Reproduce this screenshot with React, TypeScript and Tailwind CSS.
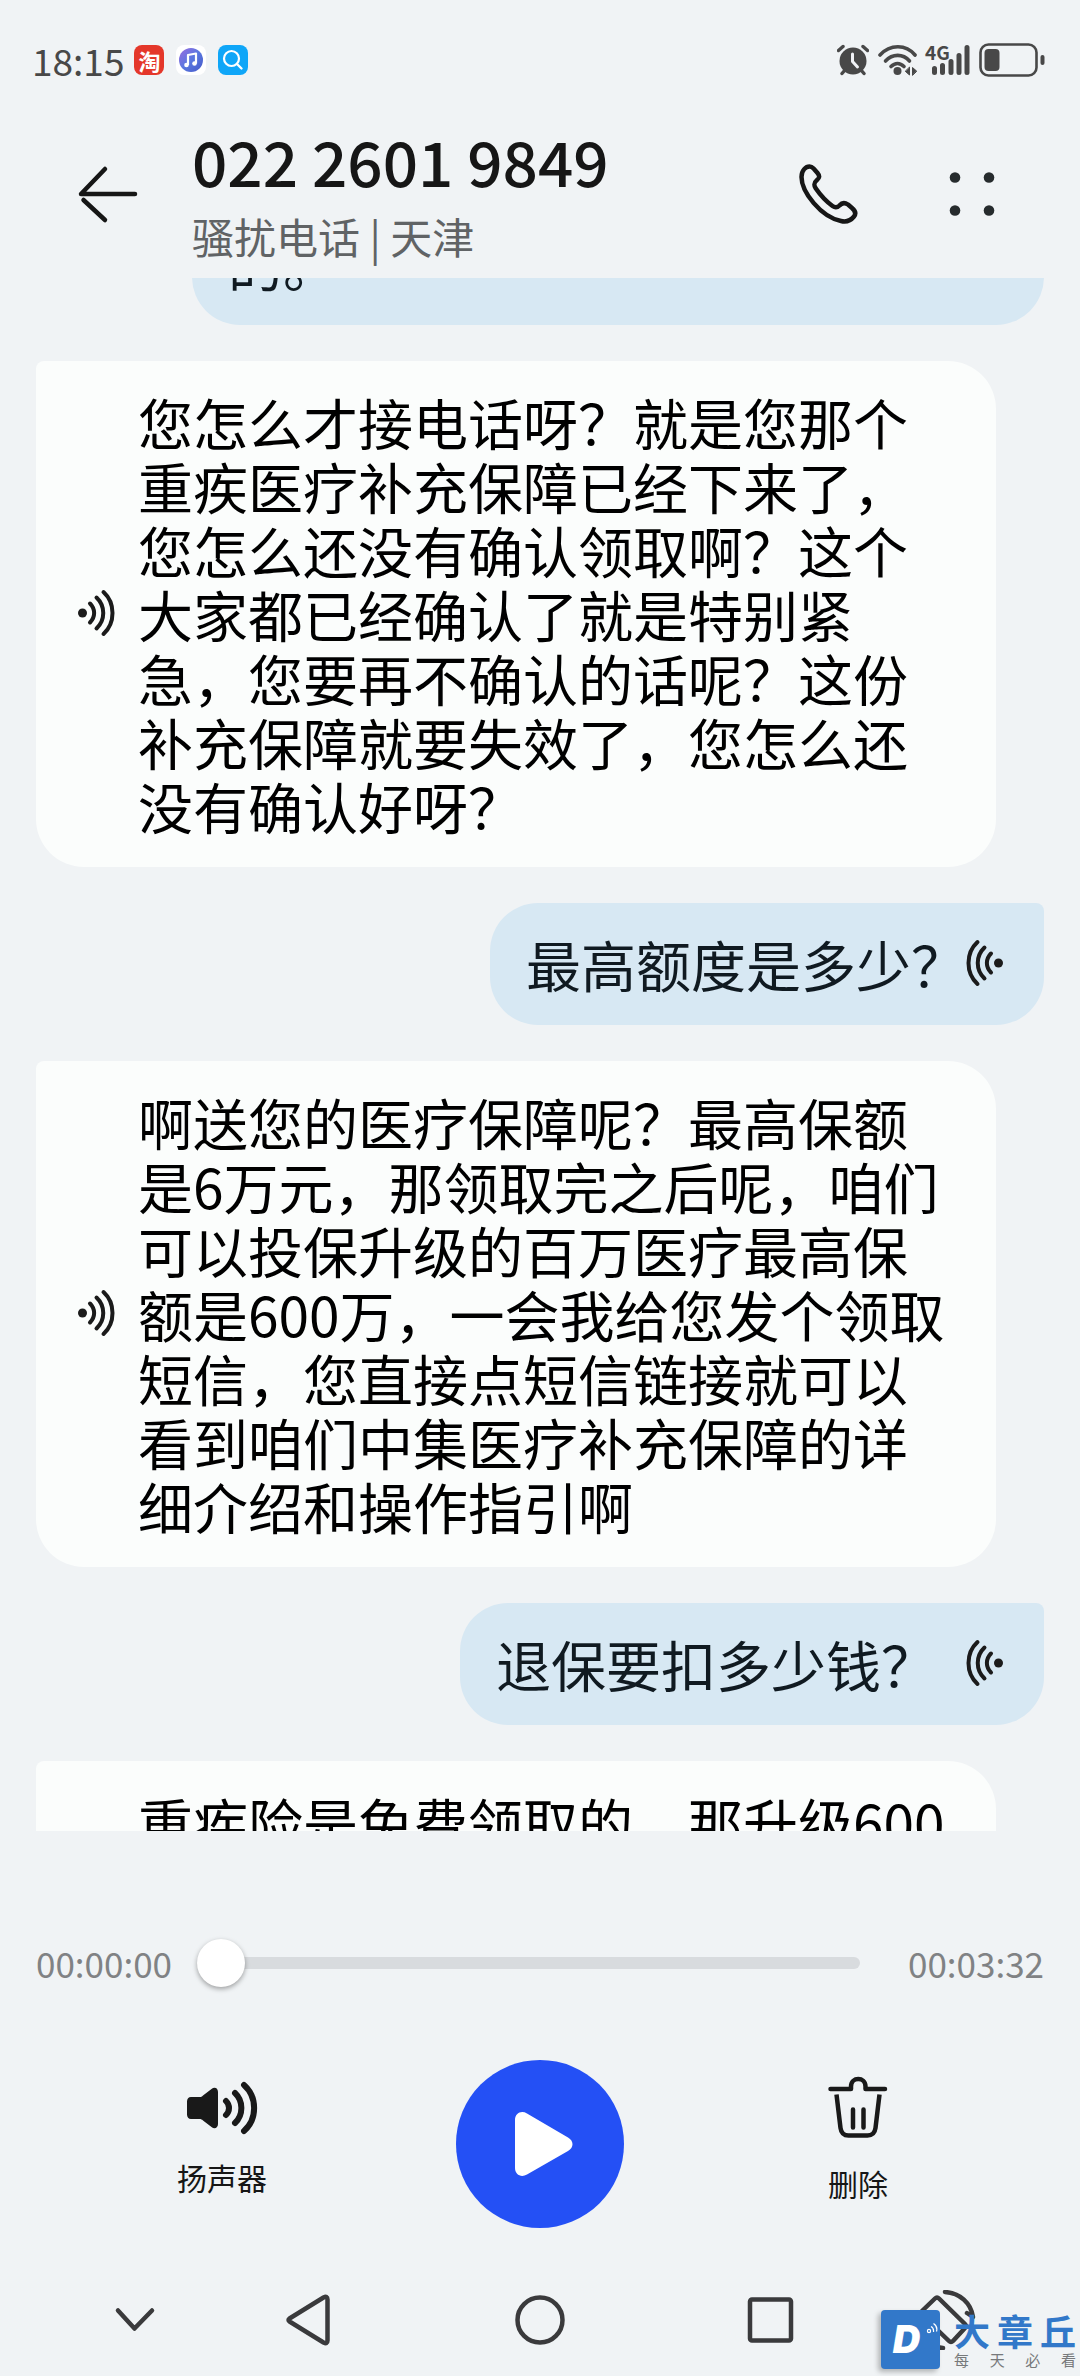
import { useState } from "react";
import type { ReactNode } from "react";

function SoundWave({ flipped = false }: { flipped?: boolean }) {
  return (
    <svg
      viewBox="0 0 38 48"
      className={flipped ? "h-12 w-[38px] shrink-0 -scale-x-100" : "h-12 w-[38px] shrink-0"}
      fill="none"
      stroke="#1b1b1b"
      strokeWidth="4"
      strokeLinecap="round"
      aria-hidden="true"
    >
      <circle cx="5.5" cy="24" r="4.5" fill="#1b1b1b" stroke="none" />
      <path d="M13 14.5C18.5 20 18.5 28 13 33.5" />
      <path d="M19.5 8.5C28.5 17 28.5 31 19.5 39.5" />
      <path d="M26.5 3C38.5 14 38.5 34 26.5 45" />
    </svg>
  );
}

function CallerMessage({ children }: { children: ReactNode }) {
  return (
    <div className="mr-12 flex shrink-0 items-center rounded-[48px] rounded-tl-lg bg-[#fbfdfc] pt-7 pr-10 pb-[30px] pl-[41px]">
      <SoundWave />
      <p className="ml-[23px] min-w-0 flex-1 text-[55px] leading-[64px] text-black">{children}</p>
    </div>
  );
}

function OwnMessage({ children, spaced = false }: { children: ReactNode; spaced?: boolean }) {
  return (
    <div
      className={
        (spaced ? "gap-[30px] " : "gap-0 ") +
        "flex shrink-0 items-center self-end rounded-[48px] rounded-tr-lg bg-[#d7e8f3] pt-7 pr-10 pb-[30px] pl-9"
      }
    >
      <p className="text-[55px] leading-[64px] text-[#101a21]">{children}</p>
      <SoundWave flipped />
    </div>
  );
}

function StatusBar() {
  return (
    <div className="flex h-[120px] shrink-0 items-center pr-[35px] pl-8 text-[#484848]">
      <span className="text-[37px] leading-10">18:15</span>
      <div className="ml-[10px] flex items-center gap-3">
        <span className="flex size-[30px] items-center justify-center rounded-lg bg-[#e4372a] text-[22px] leading-[30px] font-bold text-white">
          淘
        </span>
        <svg viewBox="0 0 30 30" className="size-[30px]" aria-hidden="true">
          <defs>
            <linearGradient id="music" x1="0" y1="0" x2="1" y2="1">
              <stop offset="0" stopColor="#9a6be0" />
              <stop offset="0.5" stopColor="#5a78e0" />
              <stop offset="1" stopColor="#4558c8" />
            </linearGradient>
          </defs>
          <rect width="30" height="30" rx="8" fill="#fff" />
          <circle cx="15" cy="15" r="12" fill="url(#music)" />
          <path d="M12 20V10L20 8.500V18.500" fill="none" stroke="#fff" strokeWidth="2.200" strokeLinejoin="round" />
          <circle cx="10.500" cy="20" r="2.300" fill="#fff" />
          <circle cx="18.500" cy="18.500" r="2.300" fill="#fff" />
        </svg>
        <svg viewBox="0 0 30 30" className="size-[30px]" aria-hidden="true">
          <rect width="30" height="30" rx="8" fill="#0fa6f8" />
          <circle cx="13.500" cy="13.500" r="7.500" fill="none" stroke="#fff" strokeWidth="2.200" />
          <path d="M19 19L23.500 23.500" stroke="#fff" strokeWidth="2.400" strokeLinecap="round" />
        </svg>
      </div>
      <div className="ml-auto flex items-center">
        <svg viewBox="0 0 32 32" className="size-8" aria-hidden="true">
          <circle cx="16" cy="17" r="13.500" fill="#484848" />
          <path d="M1.500 6.500L6 2.500M30.500 6.500L26 2.500M5 29.500L8 26M27 29.500L24 26" stroke="#484848" strokeWidth="3.400" strokeLinecap="round" />
          <path d="M15.500 10V17.500L20.500 23" fill="none" stroke="#f0f2f5" strokeWidth="3" strokeLinecap="round" strokeLinejoin="round" />
        </svg>
        <svg viewBox="0 0 40 32" className="ml-[9px] h-8 w-10" fill="none" stroke="#484848" strokeLinecap="round" aria-hidden="true">
          <path d="M2 11C12 0 28 0 37 11" strokeWidth="3.600" />
          <path d="M7.500 17C14.500 9.500 25 9.500 31.500 17" strokeWidth="3.600" />
          <path d="M13 22.500C17 18.500 22 18.500 26 22.500" strokeWidth="3.600" />
          <circle cx="19.500" cy="27" r="4" fill="#484848" stroke="none" />
          <path d="M31.500 23.500V31L27.500 27.500ZM34.500 31V23.500L38.500 27Z" fill="#484848" stroke="#484848" strokeWidth="1" />
        </svg>
        <div className="relative ml-[7px] h-8 w-[46px]">
          <span className="absolute -top-1 left-0 text-[19px] leading-6 font-bold">4G</span>
          <svg viewBox="0 0 46 32" className="h-8 w-[46px]" stroke="#484848" strokeWidth="5" strokeLinecap="round" aria-hidden="true">
            <path d="M9.500 24.500V28.500M17.500 21.500V28.500M26 17.500V28.500M34 11.500V28.500M42 3.500V28.500" />
          </svg>
        </div>
        <svg viewBox="0 0 66 34" className="ml-2 h-[34px] w-[66px]" aria-hidden="true">
          <rect x="1.500" y="1.500" width="56" height="31" rx="8" fill="none" stroke="#484848" strokeWidth="2.600" />
          <rect x="5.500" y="6" width="15" height="22" rx="4" fill="#484848" />
          <rect x="61.500" y="12" width="4" height="10" rx="2" fill="#484848" />
        </svg>
      </div>
    </div>
  );
}

function Header() {
  return (
    <header className="mb-[10px] flex h-[148px] shrink-0 items-center pr-[85px] pl-[78px]">
      <button type="button" aria-label="返回">
        <svg viewBox="0 0 60 60" className="size-[60px]" fill="none" stroke="#161616" strokeWidth="4.500" strokeLinecap="round" strokeLinejoin="round">
          <path d="M57 30H3L27 5M5.500 36L27 56" strokeLinecap="round" />
        </svg>
      </button>
      <div className="ml-[54px] flex flex-col gap-3">
        <h1 className="text-[62px] leading-[72px] font-medium text-[#161616]">022 2601 9849</h1>
        <p className="text-[42px] leading-[56px] text-[#606365]">骚扰电话 | 天津</p>
      </div>
      <button type="button" aria-label="拨打" className="ml-auto">
        <svg viewBox="0 0 64 64" className="size-16" fill="none" stroke="#161616" strokeWidth="4.500" strokeLinejoin="round">
          <path d="M5.500 15C5.500 8 10 4.500 13.500 4.500C16 4.500 17 6 18 7L21.500 11C24 14 23.500 16 21 18C18 20.500 17.500 22.500 19.500 26C25 34 31 40 36.500 44C39.500 46.200 41.500 45.500 43.500 43.500C46 40.500 49 40.500 52 42.500L56 46C59.500 49 60 52 58 54.500C54 59.500 49 60 45 59C25 55 5.500 30 5.500 15Z" />
        </svg>
      </button>
      <button type="button" aria-label="更多" className="ml-[89px]">
        <svg viewBox="0 0 46 46" className="size-[46px]" fill="#262b2d">
          <circle cx="6" cy="6.500" r="5.300" />
          <circle cx="40" cy="6.500" r="5.300" />
          <circle cx="6" cy="39.500" r="5.300" />
          <circle cx="40" cy="39.500" r="5.300" />
        </svg>
      </button>
    </header>
  );
}

function Player() {
  const [position, setPosition] = useState(0);
  return (
    <section className="shrink-0 pt-[108px]">
      <div className="flex h-12 items-center px-9 text-[35px] leading-[46px] text-[#808284]">
        <span>00:00:00</span>
        <input
          type="range"
          aria-label="播放进度"
          min={0}
          max={212}
          value={position}
          onChange={(event) => setPosition(Number(event.target.value))}
          className="mr-12 ml-[25px] h-12 min-w-0 flex-1 appearance-none bg-transparent [&::-webkit-slider-runnable-track]:h-3 [&::-webkit-slider-runnable-track]:rounded-full [&::-webkit-slider-runnable-track]:bg-[#d8dbde] [&::-webkit-slider-thumb]:-mt-[18px] [&::-webkit-slider-thumb]:size-12 [&::-webkit-slider-thumb]:appearance-none [&::-webkit-slider-thumb]:rounded-full [&::-webkit-slider-thumb]:bg-white [&::-webkit-slider-thumb]:shadow-[0_2px_5px_rgba(0,0,0,0.35)]"
        />
        <span>00:03:32</span>
      </div>
      <div className="mt-[73px] grid grid-cols-3 items-start justify-items-center px-[63px] text-[30px] leading-10 text-[#161616]">
        <button type="button" className="flex flex-col items-center gap-[21px] pt-5">
          <svg viewBox="0 0 72 56" className="h-14 w-[72px]" fill="none" stroke="#191919" strokeWidth="6" strokeLinecap="round" aria-hidden="true">
            <path d="M5 17H13.500C15 17 16 16.500 17 15.500L25.500 9C28.500 6.500 32 8 32 12V44C32 48 28.500 49.500 25.500 47L17 40.500C16 39.500 15 39 13.500 39H5C2.500 39 1 37 1 34.500V21.500C1 19 2.500 17 5 17Z" fill="#191919" stroke="none" />
            <path d="M40 21C44 25 44 31 40 35" />
            <path d="M49 13C57.500 21 57.500 35 49 43" />
            <path d="M58 5C71.500 17 71.500 39 58 51" />
          </svg>
          <span>扬声器</span>
        </button>
        <button type="button" aria-label="播放" className="flex size-[168px] items-center justify-center rounded-full bg-[#2450f5]">
          <svg viewBox="0 0 64 68" className="ml-2 h-[68px] w-16" fill="#fff">
            <path d="M3 10C3 3.500 9 0 15 3.500L56 27.500C62 31 62 37.500 56 41L15 64.500C9 68 3 64.500 3 58Z" />
          </svg>
        </button>
        <button type="button" className="flex flex-col items-center gap-6 pt-[15px]">
          <svg viewBox="0 0 64 64" className="size-16" fill="none" stroke="#191919" strokeWidth="4.500" strokeLinecap="round" strokeLinejoin="round" aria-hidden="true">
            <path d="M4.500 14H25V11.500C25 1.500 39.500 1.500 39.500 11.500V14H59" />
            <path d="M10.500 19.500L14.500 53Q15.500 60.500 22.500 60.500H41.500Q48.500 60.500 49.500 53L53.500 19.500" strokeLinecap="butt" />
            <path d="M27 34.500V52.500M37.500 34.500V52.500" />
          </svg>
          <span>删除</span>
        </button>
      </div>
    </section>
  );
}

function Watermark() {
  return (
    <div className="absolute right-1 bottom-1 flex items-end gap-[14px]">
      <div className="relative mb-[3px] flex size-[59px] items-center justify-center rounded-[4px] bg-[#3278c9] shadow-[-3px_3px_5px_rgba(0,0,0,0.25)]">
        <span className="mr-2 font-[Inter] text-[38px] leading-[59px] font-black text-white italic">D</span>
        <svg viewBox="0 0 12 14" className="absolute top-3 right-[2px] h-[14px] w-3" fill="none" stroke="#fff" strokeWidth="1.200" aria-hidden="true">
          <circle cx="3" cy="9" r="1.600" />
          <path d="M5 4.500Q8 6 7.500 10M7.500 1.500Q12 4.500 10.500 9.500" />
        </svg>
      </div>
      <div className="w-[122px] pb-[2px]">
        <div className="flex justify-between text-[36px] leading-[40px] font-bold text-[#3278c9]">
          <span>大</span>
          <span>章</span>
          <span>丘</span>
        </div>
        <div className="flex justify-between text-[15px] leading-5 text-[#77797b]">
          <span>每</span>
          <span>天</span>
          <span>必</span>
          <span>看</span>
        </div>
      </div>
    </div>
  );
}

function NavigationBar() {
  const stroke = { fill: "none", stroke: "#3a3a3c", strokeWidth: 4.5, strokeLinecap: "round", strokeLinejoin: "round" } as const;
  return (
    <nav className="relative mt-9 grid h-28 shrink-0 grid-cols-[120fr_232fr_230fr_232fr_120fr] place-items-center px-[73px]">
      <button type="button" aria-label="收起">
        <svg viewBox="0 0 60 60" className="size-[60px]" {...stroke}>
          <path d="M15 20.500L31.500 38.500L49 20.500" />
        </svg>
      </button>
      <button type="button" aria-label="后退">
        <svg viewBox="0 0 60 60" className="size-[60px]" {...stroke}>
          <path d="M10.500 28.500L44.500 7.500Q48.500 5.500 48.500 9.500V50.500Q48.500 54.500 44.500 52.500L10.500 31.500Q8.500 30 10.500 28.500Z" />
        </svg>
      </button>
      <button type="button" aria-label="主页">
        <svg viewBox="0 0 60 60" className="size-[60px]" {...stroke}>
          <circle cx="30" cy="30" r="22.500" />
        </svg>
      </button>
      <button type="button" aria-label="最近任务">
        <svg viewBox="0 0 60 60" className="size-[60px]" {...stroke}>
          <rect x="9" y="9.500" width="41" height="41" rx="2" />
        </svg>
      </button>
      <button type="button" aria-label="旋转屏幕">
        <svg viewBox="0 0 60 60" className="size-[60px]" {...stroke}>
          <path d="M18 8.500Q20 6.500 22 8.500L48 34Q50 36 48 38L36 51Q34 53 32 51L5 25Q3 23 5 21Z" />
          <path d="M28 2C43 3 54 13 56 27L50 23M26 58C12 57 0 47 -1 34" />
        </svg>
      </button>
      <Watermark />
    </nav>
  );
}

export default function App() {
  return (
    <div className="flex h-screen w-full flex-col overflow-hidden bg-[#f0f3f5] font-['Noto_Sans_CJK_SC',sans-serif]">
      <StatusBar />
      <Header />
      <main className="flex min-h-0 flex-1 flex-col gap-9 overflow-hidden px-9">
        <div className="-mt-[75px] ml-[156px] shrink-0 rounded-[48px] rounded-tr-lg bg-[#d7e8f3] px-9 pt-7 pb-[30px]">
          <p className="text-[55px] leading-[64px] text-[#101a21]">的。</p>
        </div>
        <CallerMessage>
          您怎么才接电话呀？就是您那个重疾医疗补充保障已经下来了，您怎么还没有确认领取啊？这个大家都已经确认了就是特别紧急，您要再不确认的话呢？这份补充保障就要失效了，您怎么还没有确认好呀？
        </CallerMessage>
        <OwnMessage>最高额度是多少？</OwnMessage>
        <CallerMessage>
          啊送您的医疗保障呢？最高保额是6万元，那领取完之后呢，咱们可以投保升级的百万医疗最高保额是600万，一会我给您发个领取短信，您直接点短信链接就可以看到咱们中集医疗补充保障的详细介绍和操作指引啊
        </CallerMessage>
        <OwnMessage spaced>退保要扣多少钱？</OwnMessage>
        <div className="mr-12 shrink-0 rounded-[48px] rounded-tl-lg bg-[#fbfdfc] pt-7 pr-10 pb-[30px] pl-[102px]">
          <p className="text-[55px] leading-[64px] text-black">重疾险是免费领取的，那升级600</p>
        </div>
      </main>
      <Player />
      <NavigationBar />
    </div>
  );
}
